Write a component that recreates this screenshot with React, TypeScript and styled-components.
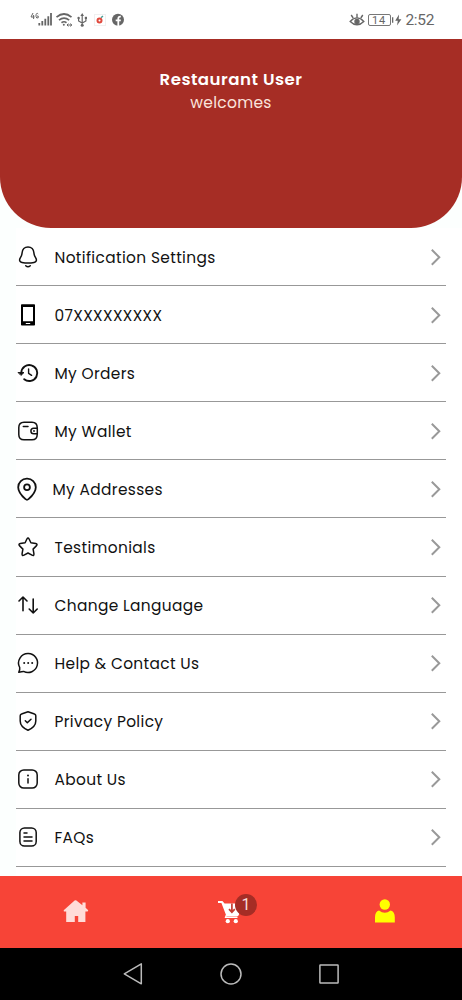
import React from "react";
import styled, { createGlobalStyle } from "styled-components";

const GlobalStyle = createGlobalStyle`
  * { box-sizing: border-box; }
  body { margin: 0; background: #fff; }
`;

const Screen = styled.div`
  width: 462px;
  height: 1000px;
  display: flex;
  flex-direction: column;
  overflow: hidden;
  background: #fcfffe;
  font-family: Poppins, Inter, sans-serif;
  color: #111;
`;

const StatusBar = styled.header`
  height: 39px;
  flex: none;
  display: flex;
  align-items: center;
  justify-content: space-between;
  padding: 0 28px 0 30px;
  background: #fff;
  color: #666;
`;

const StatusGroup = styled.div<{ $gap: number }>`
  display: flex;
  align-items: center;
  gap: ${(p) => p.$gap}px;
`;

const Battery = styled.span`
  width: 23px;
  height: 12px;
  border: 1px solid #777;
  border-radius: 2px;
  font: 11px/11px Roboto, sans-serif;
  letter-spacing: 0.8px;
  text-align: center;
`;

const Clock = styled.span`
  font: 15.5px/20px Roboto, sans-serif;
  letter-spacing: -0.35px;
`;

const Hero = styled.section`
  height: 189px;
  flex: none;
  padding-top: 29px;
  border-radius: 0 0 51px 51px;
  background: #a62d25;
  text-align: center;
`;

const HeroName = styled.h1`
  margin: 0;
  font-size: 16.6px;
  line-height: 23px;
  font-weight: 600;
  letter-spacing: 0.5px;
  color: #fff;
`;

const HeroGreeting = styled.p`
  margin: 0;
  font-size: 15.5px;
  line-height: 23px;
  letter-spacing: 0.28px;
  color: #fbe3dc;
`;

const Menu = styled.ul`
  flex: 1;
  min-height: 0;
  margin: 0 0 0 16px;
  padding: 0 16px 0 0;
  list-style: none;
  background: #fff;
`;

const MenuRow = styled.li`
  height: 58.1px;
  display: flex;
  align-items: center;
  border-bottom: 1px solid #989898;
`;

const IconSlot = styled.span<{ $gap: number }>`
  width: 24px;
  height: 24px;
  flex: none;
  margin-right: ${(p) => p.$gap}px;
  svg { display: block; }
`;

const Label = styled.span`
  flex: 1;
  padding-top: 2px;
  font-size: 15.4px;
  line-height: 24px;
  white-space: nowrap;
  letter-spacing: 0.35px;
`;

const TabBar = styled.nav`
  height: 72px;
  flex: none;
  display: grid;
  grid-template-columns: repeat(3, 1fr);
  place-items: center;
  background: #f74437;
`;

const Tab = styled.div`
  position: relative;
  width: 28px;
  height: 28px;
  svg { display: block; }
`;

const Badge = styled.span`
  position: absolute;
  left: 18px;
  top: -4px;
  width: 22px;
  height: 22px;
  border-radius: 50%;
  background: #a52d25;
  color: #f7dcd8;
  font: 16px/22px Roboto, sans-serif;
  text-align: center;
`;

const SystemBar = styled.footer`
  height: 52px;
  flex: none;
  display: flex;
  align-items: center;
  justify-content: center;
  gap: 74px;
  background: #000;
`;

const Line = ({ children, width = 1.5 }: { children: React.ReactNode; width?: number }) => (
  <svg width="24" height="24" viewBox="0 0 24 24" fill="none" stroke="#111" strokeWidth={width} strokeLinecap="round" strokeLinejoin="round">
    {children}
  </svg>
);

const dot = (x: number, y: number, r = 0.9) => <circle cx={x} cy={y} r={r} fill="#111" stroke="none" />;

const icons = {
  bell: (
    <Line>
      <path d="M12 1.9C8.6 1.9 6.3 4.4 6.1 7.8C6 10.2 5.4 11.2 4.3 12.9C2.8 15.4 3.8 16.9 6 17.4C10 18.3 14 18.3 18 17.4C20.2 16.9 21.2 15.4 19.7 12.9C18.6 11.2 18 10.2 17.9 7.8C17.7 4.4 15.4 1.9 12 1.9Z" />
      <path d="M9.7 20.7C11 21.9 13 21.9 14.3 20.7" />
    </Line>
  ),
  phone: (
    <svg width="24" height="24" viewBox="0 0 24 24">
      <path fill="#000" fillRule="evenodd" d="M5.8 1.2H18.2Q19 1.2 19 2V21.8Q19 22.6 18.2 22.6H5.8Q5 22.6 5 21.8V2Q5 1.2 5.8 1.2ZM7 4V18.2H17V4ZM9.8 19.9V20.9H14.2V19.9Z" />
    </svg>
  ),
  history: (
    <Line width={1.9}>
      <path d="M5.3 11.6A8 8 0 1 1 8.2 18.2" />
      <path d="M2.4 11.5H8L5.2 14.2Z" fill="#111" strokeWidth="0.9" />
      <path d="M12.6 8V12.4L15.6 14.3" strokeWidth="1.4" />
    </Line>
  ),
  wallet: (
    <Line>
      <path d="M21.2 9V8.5Q21.2 3.2 16 3.2H8Q2.8 3.2 2.8 8.5V15.5Q2.8 20.8 8 20.8H16Q21.2 20.8 21.2 15.5V14.8" />
      <path d="M21.3 9.2H17.7A2.8 2.8 0 0 0 17.7 14.8H21.3ZM7.3 7.6H12" />
      {dot(18, 12)}
    </Line>
  ),
  pin: (
    <Line width={1.8}>
      <path d="M11 1.6A8.6 8.6 0 0 0 2.2 10.2C2.2 15 6.2 19.2 9.5 22.1Q11 23.3 12.5 22.1C15.8 19.2 19.8 15 19.8 10.2A8.6 8.6 0 0 0 11 1.6Z" />
      <circle cx="11" cy="10.2" r="2.9" />
    </Line>
  ),
  star: (
    <Line>
      <path d="M10.9 4Q12 2 13.1 4L14.9 7.8L19.7 8.6Q22 9.1 20.3 10.9L17.1 14.1L17.9 18.7Q18.2 21.2 16 20.1L12 18L8 20.1Q5.8 21.2 6.1 18.7L6.9 14.1L3.7 10.9Q2 9.1 4.3 8.6L9.1 7.8Z" />
    </Line>
  ),
  arrows: (
    <Line width={1.6}>
      <path d="M7 17.8V4M3 8L7 4L11 8M17.2 6V20M13.2 16L17.2 20L21.2 16" />
    </Line>
  ),
  chat: (
    <Line>
      <path d="M12.3 2.5A9.5 9.5 0 1 1 7.6 20.4Q6.2 20.3 2.8 21.3Q4.1 18.3 3.7 16.5A9.5 9.5 0 0 1 12.3 2.5Z" />
      {dot(8.2, 12, 1)}{dot(12.2, 12, 1)}{dot(16.2, 12, 1)}
    </Line>
  ),
  shield: (
    <Line>
      <path d="M12 2.8L18.5 5Q19.8 5.4 19.8 6.8V12C19.8 17 16.2 19.4 12 21.3C7.8 19.4 4.2 17 4.2 12V6.8Q4.2 5.4 5.5 5Z" />
      <path d="M9.3 11.8L11.3 13.7L15 10.2" />
    </Line>
  ),
  info: (
    <Line>
      <rect x="2.8" y="2.9" width="18.4" height="18.2" rx="5" />
      <path d="M12 11.8V16" />
      {dot(12, 8.4, 1)}
    </Line>
  ),
  document: (
    <Line>
      <rect x="3.9" y="2.9" width="16.3" height="18.2" rx="4.6" />
      <path d="M8 8H11M8 12H16M8 16H16" />
    </Line>
  ),
};

const items: { icon: keyof typeof icons; label: string; gap?: number }[] = [
  { icon: "bell", label: "Notification Settings" },
  { icon: "phone", label: "07XXXXXXXXX" },
  { icon: "history", label: "My Orders" },
  { icon: "wallet", label: "My Wallet" },
  { icon: "pin", label: "My Addresses", gap: 12.5 },
  { icon: "star", label: "Testimonials" },
  { icon: "arrows", label: "Change Language" },
  { icon: "chat", label: "Help & Contact Us" },
  { icon: "shield", label: "Privacy Policy" },
  { icon: "info", label: "About Us" },
  { icon: "document", label: "FAQs" },
];

const Chevron = () => (
  <svg width="20" height="20" viewBox="0 0 20 20" fill="none" stroke="#999" strokeWidth="2">
    <path d="M5.8 2.8L13.3 10.3L5.8 17.8" />
  </svg>
);

const NetworkIcons = () => (
  <svg width="96" height="18" viewBox="30 11 96 18" fill="none" stroke="#666">
    <g strokeWidth="1">
      <path d="M33 13L31 17H34.5M33.6 15V19M38.2 14Q37.5 13 36.6 13.6Q35.8 14.3 36 16.5Q36.4 18.8 38.2 17.8V16H37.2" />
    </g>
    <path d="M39.3 23V25.6M42.3 21V25.6M45.3 18.8V25.6M48.3 16.3V25.6M51 13V25.6" strokeWidth="1.8" />
    <path d="M56.5 17.2Q64 10.8 71.5 17.2M59 20.2Q64 16 69.2 20.2M61.5 22.7Q64 20.8 66.5 22.7" strokeWidth="1.7" />
    <circle cx="63.8" cy="24.8" r="1" fill="#666" stroke="none" />
    <path d="M67 25H72M68.4 23.6L67 25L68.4 26.4M70.2 23.6L71.8 25L70.2 26.4" strokeWidth="1" />
    <path d="M82.2 15V25M78.6 18V21L82.2 23L85.9 21V17.8" strokeWidth="1.2" />
    <path d="M82.2 13L84 16H80.4Z" fill="#666" stroke="none" />
    <circle cx="82.2" cy="25.2" r="1.5" fill="#666" stroke="none" />
    <circle cx="78.6" cy="18" r="1.2" fill="#666" stroke="none" />
    <path d="M84.8 16.8H87V19H84.8Z" fill="#666" stroke="none" />
    <rect x="94.5" y="14.5" width="11" height="11" fill="#fff" stroke="#f0f0f0" />
    <circle cx="99.5" cy="20.6" r="2" fill="#fff" stroke="#e0493d" strokeWidth="2" />
    <path d="M101 17.8L103 16" stroke="#4a9e98" strokeWidth="1.4" />
    <circle cx="118" cy="19.7" r="6" fill="#666" stroke="none" />
    <path d="M118.3 26V18.4Q118.3 16.4 120.8 16.7M115.7 20.4H120.8" stroke="#fff" strokeWidth="1.8" />
  </svg>
);

const EyeIcon = () => (
  <svg width="16" height="16" viewBox="0 0 16 16" fill="none" stroke="#666" strokeWidth="1.4">
    <path d="M1.2 9.4Q8 2.4 14.8 9.4Q8 16.2 1.2 9.4ZM8 5.4V1.8M4.2 6L2.2 3M11.8 6L13.8 3" />
    <circle cx="8" cy="9.4" r="2" fill="#666" />
  </svg>
);

const ChargeIcon = () => (
  <svg width="11" height="12" viewBox="0 0 11 12" fill="#666">
    <path d="M0 3.2H1.3V8.8H0ZM7 0.6L3.2 6.8H5.8L5 11.6L9.4 5.2H6.7Z" />
  </svg>
);

export default function App() {
  return (
    <Screen>
      <GlobalStyle />
      <StatusBar>
        <NetworkIcons />
        <StatusGroup $gap={3}>
          <EyeIcon />
          <StatusGroup $gap={1}>
            <Battery>14</Battery>
            <ChargeIcon />
          </StatusGroup>
          <Clock>2:52</Clock>
        </StatusGroup>
      </StatusBar>
      <Hero>
        <HeroName>Restaurant User</HeroName>
        <HeroGreeting>welcomes</HeroGreeting>
      </Hero>
      <Menu>
        {items.map(({ icon, label, gap = 14.5 }) => (
          <MenuRow key={label}>
            <IconSlot $gap={gap}>{icons[icon]}</IconSlot>
            <Label>{label}</Label>
            <Chevron />
          </MenuRow>
        ))}
      </Menu>
      <TabBar>
        <Tab>
          <svg width="28" height="28" viewBox="1 0 28 28" fill="#ffdcd8">
            <path d="M12.6 2.6Q13.5 2 14.4 2.6L20.4 7.2V4.4H23.6V9.8L26 12Q26.6 13.4 25.4 13.6H23.4V24H16.2V18H12.8V24H4.2V13.6H2.2Q1 13.2 2 12Z" />
          </svg>
        </Tab>
        <Tab>
          <svg width="28" height="28" viewBox="0 0 28 28" fill="#fff">
            <path d="M1 3H5.4L7.6 5.6H24L22 16.6Q21.5 18.6 19.5 18.6H9.6L4.4 5H1Z" />
            <path d="M9.4 17L8.6 19.4H20.5" stroke="#fff" strokeWidth="1.4" fill="none" />
            <path d="M14.9 5.6V14M12 11.2L14.9 14.2L17.8 11.2" stroke="#c43d32" strokeWidth="1.7" fill="none" />
            <circle cx="10.8" cy="23.2" r="2.1" />
            <circle cx="18.8" cy="23.2" r="2.1" />
          </svg>
          <Badge>1</Badge>
        </Tab>
        <Tab>
          <svg width="28" height="28" viewBox="0 0.7 28 28" fill="#ff0">
            <circle cx="13.8" cy="7.2" r="5.2" />
            <path d="M4 25.2V20Q4 14.2 8 13.2Q13.8 17.8 19.6 13.2Q23.8 14.2 23.8 20V25.2Z" />
          </svg>
        </Tab>
      </TabBar>
      <SystemBar>
        <svg width="24" height="24" viewBox="0 0 24 24" fill="none" stroke="#bbb" strokeWidth="1.5" strokeLinejoin="round">
          <path d="M20.3 1.9V21.8L3.3 11.9Z" />
        </svg>
        <svg width="24" height="24" viewBox="0 0 24 24" fill="none" stroke="#bbb" strokeWidth="1.5">
          <circle cx="12" cy="12" r="10" />
        </svg>
        <svg width="24" height="24" viewBox="0 0 24 24" fill="none" stroke="#bbb" strokeWidth="1.5">
          <rect x="2.9" y="2.9" width="18.2" height="18.2" rx="0.5" />
        </svg>
      </SystemBar>
    </Screen>
  );
}
